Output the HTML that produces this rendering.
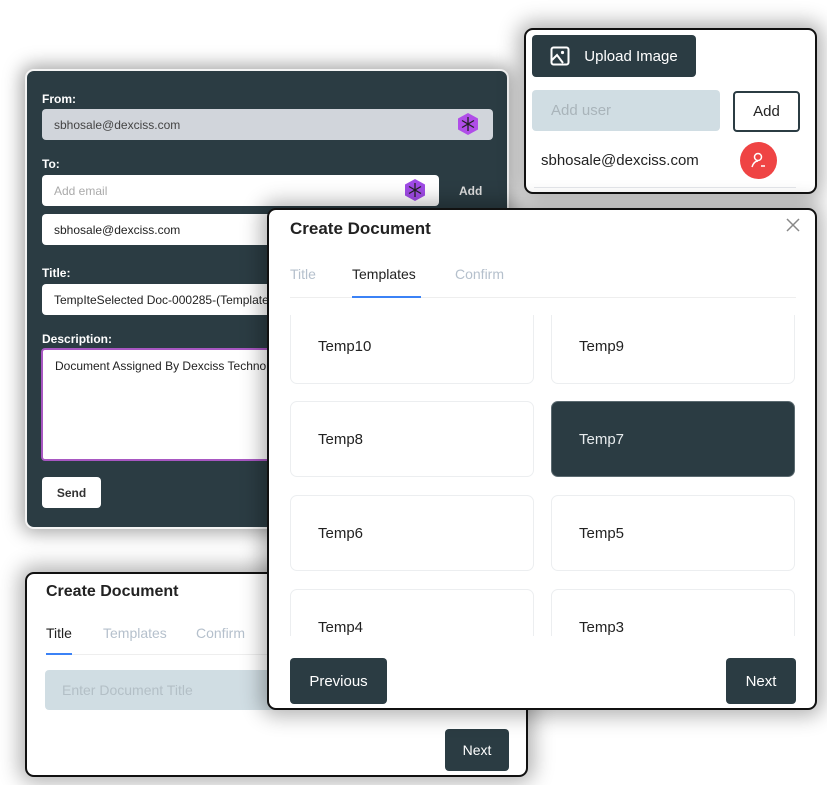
<!DOCTYPE html>
<html><head><meta charset="utf-8"><style>
*{box-sizing:border-box;margin:0;padding:0}
body{width:827px;height:785px;background:#fff;position:relative;overflow:hidden;font-family:"Liberation Sans",sans-serif}
.abs{position:absolute}
.dark{left:25px;top:69px;width:484px;height:460px;background:#2b3c43;border-radius:9px;border:2px solid #f4f4f4;box-shadow:0 0 18px 4px rgba(0,0,0,.35)}
.lbl{position:absolute;color:#fff;font-weight:bold;font-size:12px}
.inp{position:absolute;background:#fff;border-radius:4px;font-size:12px;color:#222;padding-left:12px;display:flex;align-items:center}
.hex{position:absolute;width:24px;height:24px}
.card{position:absolute;background:#fff;border:2px solid #111;border-radius:9px;box-shadow:0 0 20px 6px rgba(0,0,0,.3)}
.btn{position:absolute;background:#2b3c43;color:#fff;border-radius:4px;display:flex;align-items:center;justify-content:center;font-size:15px}
.tpl{position:absolute;width:244px;height:76px;border:1px solid #eceef0;border-radius:7px;font-size:15px;color:#222;padding-left:27px;display:flex;align-items:center;background:#fff}
</style></head><body>

<div class="abs dark">
 <div class="lbl" style="left:15px;top:21px">From:</div>
 <div class="inp" style="left:15px;top:38px;width:451px;height:31px;background:#d1d5db;color:#444">sbhosale@dexciss.com</div>
 <svg class="hex" style="left:429px;top:41px" viewBox="0 0 24 24"><polygon points="12,1 22,6.5 22,17.5 12,23 2,17.5 2,6.5" fill="#b04de8"/><g stroke="#222" stroke-width="1.3"><line x1="12" y1="5" x2="12" y2="19"/><line x1="6" y1="8.5" x2="18" y2="15.5"/><line x1="6" y1="15.5" x2="18" y2="8.5"/></g></svg>
 <div class="lbl" style="left:15px;top:86px">To:</div>
 <div class="inp" style="left:15px;top:104px;width:397px;height:31px;color:#aaa">Add email</div>
 <svg class="hex" style="left:376px;top:107px" viewBox="0 0 24 24"><polygon points="12,1 22,6.5 22,17.5 12,23 2,17.5 2,6.5" fill="#a04be6"/><g stroke="#222" stroke-width="1.3"><line x1="12" y1="5" x2="12" y2="19"/><line x1="6" y1="8.5" x2="18" y2="15.5"/><line x1="6" y1="15.5" x2="18" y2="8.5"/></g></svg>
 <div class="lbl" style="left:432px;top:113px;color:#ddd">Add</div>
 <div class="inp" style="left:15px;top:143px;width:260px;height:31px">sbhosale@dexciss.com</div>
 <div class="lbl" style="left:15px;top:195px">Title:</div>
 <div class="inp" style="left:15px;top:213px;width:260px;height:31px;white-space:nowrap;overflow:hidden">TempIteSelected Doc-000285-(Template2</div>
 <div class="lbl" style="left:15px;top:261px">Description:</div>
 <div class="inp" style="left:14px;top:277px;width:260px;height:113px;border:2px solid #a857c2;align-items:flex-start;padding-top:9px;white-space:nowrap;overflow:hidden">Document Assigned By Dexciss Technolo</div>
 <div class="inp" style="left:15px;top:406px;width:59px;height:31px;justify-content:center;padding:0;font-weight:bold;color:#333">Send</div>
</div>

<div class="card" style="left:524px;top:28px;width:293px;height:166px">
 <div class="btn" style="left:6px;top:5px;width:164px;height:42px;font-size:15px">
  <svg width="20" height="20" viewBox="0 0 20 20" style="margin-right:14px"><rect x="1.5" y="1.5" width="17" height="17" rx="2" fill="none" stroke="#fff" stroke-width="2"/><circle cx="12.5" cy="6.5" r="1.6" fill="#fff"/><path d="M2 14 L7 9 L13 17" fill="none" stroke="#fff" stroke-width="2"/></svg>Upload Image</div>
 <div class="inp" style="left:6px;top:60px;width:188px;height:41px;background:#d0dde3;color:#a9b4ba;padding-left:19px;font-size:15px">Add user</div>
 <div class="abs" style="left:207px;top:61px;width:67px;height:41px;border:2px solid #2b3c43;border-radius:4px;display:flex;align-items:center;justify-content:center;font-size:15px;color:#222">Add</div>
 <div class="abs" style="left:15px;top:122px;font-size:15px;color:#222">sbhosale@dexciss.com</div>
 <svg class="abs" style="left:214px;top:112px" width="37" height="37" viewBox="0 0 37 37"><circle cx="18.5" cy="18.5" r="18.5" fill="#ef4444"/><circle cx="18" cy="15" r="3.5" fill="none" stroke="#fff" stroke-width="1.5"/><path d="M12 25 q2-6 6-6" fill="none" stroke="#fff" stroke-width="1.5"/><line x1="21" y1="24" x2="25" y2="24" stroke="#fff" stroke-width="1.5"/></svg>
 <div class="abs" style="left:8px;top:157px;width:262px;height:1px;background:#e5e7eb"></div>
</div>

<div class="card" style="left:25px;top:572px;width:503px;height:205px">
 <div class="abs" style="left:19px;top:9px;font-size:16px;font-weight:bold;color:#222">Create Document</div>
 <div class="abs" style="left:19px;top:51px;font-size:14px;color:#222">Title</div>
 <div class="abs" style="left:76px;top:51px;font-size:14px;color:#b5c0cc">Templates</div>
 <div class="abs" style="left:169px;top:51px;font-size:14px;color:#b5c0cc">Confirm</div>
 <div class="abs" style="left:19px;top:80px;width:460px;height:1px;background:#eee"></div>
 <div class="abs" style="left:19px;top:79px;width:26px;height:2px;background:#3b82f6"></div>
 <div class="inp" style="left:18px;top:96px;width:440px;height:40px;background:#d0dde3;color:#b3bfc6;padding-left:17px;font-size:14px">Enter Document Title</div>
 <div class="btn" style="left:418px;top:155px;width:64px;height:42px;font-size:14px">Next</div>
</div>

<div class="card" style="left:267px;top:208px;width:550px;height:502px">
 <div class="abs" style="left:21px;top:9px;font-size:17px;font-weight:bold;color:#222">Create Document</div>
 <svg class="abs" style="left:516px;top:7px" width="16" height="16" viewBox="0 0 16 16"><path d="M2 2L14 14M14 2L2 14" stroke="#888" stroke-width="1.5"/></svg>
 <div class="abs" style="left:21px;top:56px;font-size:14px;color:#b5c0cc">Title</div>
 <div class="abs" style="left:83px;top:56px;font-size:14px;color:#222">Templates</div>
 <div class="abs" style="left:186px;top:56px;font-size:14px;color:#b5c0cc">Confirm</div>
 <div class="abs" style="left:21px;top:87px;width:506px;height:1px;background:#eee"></div>
 <div class="abs" style="left:83px;top:86px;width:69px;height:2px;background:#3b82f6"></div>
 <div class="abs" style="left:21px;top:105px;width:508px;height:321px;overflow:hidden">
  <div class="tpl" style="left:0;top:-7px">Temp10</div>
  <div class="tpl" style="left:261px;top:-7px">Temp9</div>
  <div class="tpl" style="left:0;top:86px">Temp8</div>
  <div class="tpl" style="left:261px;top:86px;background:#2b3c43;color:#e8ecee;border-color:#5b6a70">Temp7</div>
  <div class="tpl" style="left:0;top:180px">Temp6</div>
  <div class="tpl" style="left:261px;top:180px">Temp5</div>
  <div class="tpl" style="left:0;top:274px">Temp4</div>
  <div class="tpl" style="left:261px;top:274px">Temp3</div>
 </div>
 <div class="btn" style="left:21px;top:448px;width:97px;height:46px">Previous</div>
 <div class="btn" style="left:457px;top:448px;width:70px;height:46px">Next</div>
</div>
</body></html>
